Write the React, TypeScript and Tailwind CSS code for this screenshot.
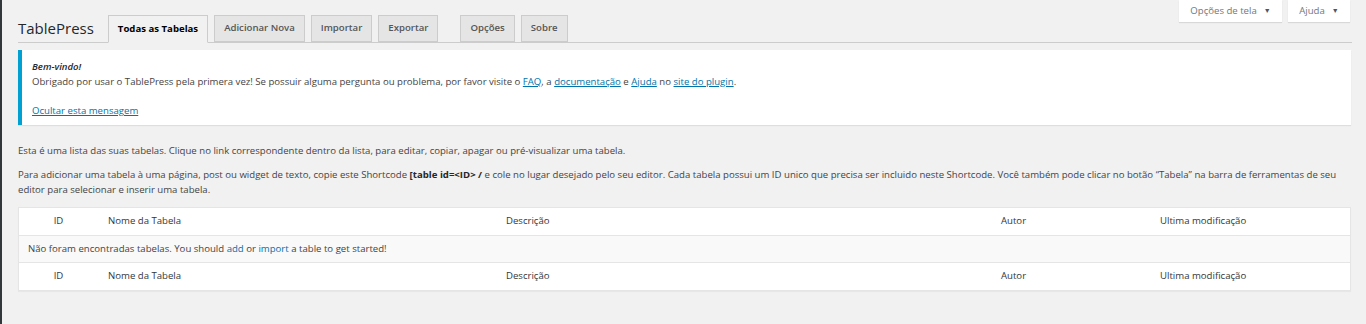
import React from 'react'

const font = { fontFamily: '"Open Sans", "Noto Sans", sans-serif' }

const Tab = ({ label, active = false }: { label: string; active?: boolean }) => {
    if (active) {
        return (
            <div className="h-[28px] -mb-px px-[9px] flex items-center border border-[#ccc] border-b-[#f1f1f1] bg-[#f1f1f1] text-[9.6px] font-bold text-black">
                {label}
            </div>
        )
    }
    return (
        <div className="h-[27px] px-[9px] flex items-center border border-[#ccc] bg-[#e5e5e5] text-[9.6px] font-semibold text-[#555]">
            {label}
        </div>
    )
}

const HeaderRow = () => (
    <div className="grid grid-cols-[79px_398px_495px_159px_1fr] h-[27px] items-center text-[9.6px] text-[#32373c]">
        <div className="text-center">ID</div>
        <div className="pl-[10px]">Nome da Tabela</div>
        <div className="pl-[10px]">Descrição</div>
        <div className="pl-[10px]">Autor</div>
        <div className="pl-[10px]">Ultima modificação</div>
    </div>
)

const App = () => {
    return (
        <div className="flex min-h-[324px] bg-[#f1f1f1] text-[#444]" style={font}>
            <div className="w-[2px] bg-[#32373c] shrink-0"></div>

            <div className="flex-1 pl-[16px] pr-[15px] relative">
                {/* screen options */}
                <div className="absolute right-[16px] top-0 flex gap-[6px]">
                    <div className="h-[22px] w-[103px] bg-white shadow-[0_1px_1px_rgba(0,0,0,0.1)] flex items-center justify-center gap-[7px] text-[9.6px] text-[#72777c]">
                        Opções de tela <span className="text-[7px] text-[#555]">▼</span>
                    </div>
                    <div className="h-[22px] w-[62px] bg-white shadow-[0_1px_1px_rgba(0,0,0,0.1)] flex items-center justify-center gap-[7px] text-[9.6px] text-[#72777c]">
                        Ajuda <span className="text-[7px] text-[#555]">▼</span>
                    </div>
                </div>

                {/* title + tabs */}
                <div className="flex items-end pt-[15px] border-b border-[#ccc] mr-[-1px]">
                    <h1 className="text-[15px] leading-[27px] text-[#23282d] mr-[14px] self-center">TablePress</h1>
                    <div className="flex items-end gap-[6px]">
                        <Tab label="Todas as Tabelas" active />
                        <Tab label="Adicionar Nova" />
                        <Tab label="Importar" />
                        <Tab label="Exportar" />
                        <div className="w-[10px]"></div>
                        <Tab label="Opções" />
                        <Tab label="Sobre" />
                    </div>
                </div>

                {/* welcome notice */}
                <div className="mt-[7px] bg-white border-l-[4px] border-[#00a0d2] shadow-[0_1px_1px_rgba(0,0,0,0.08)] pl-[10px] pt-[9px] pb-[7px] text-[9.6px] leading-[15px]">
                    <p className="italic font-semibold text-[#23282d]">Bem-vindo!</p>
                    <p>
                        Obrigado por usar o TablePress pela primera vez! Se possuir alguma pergunta ou problema, por favor visite o{' '}
                        <a className="text-[#0073aa] underline">FAQ</a>, a{' '}
                        <a className="text-[#0073aa] underline">documentação</a> e{' '}
                        <a className="text-[#0073aa] underline">Ajuda</a> no{' '}
                        <a className="text-[#0073aa] underline">site do plugin</a>.
                    </p>
                    <p className="mt-[14px]">
                        <a className="text-[#0073aa] underline">Ocultar esta mensagem</a>
                    </p>
                </div>

                {/* intro text */}
                <p className="mt-[18px] text-[9.6px] leading-[15px]">
                    Esta é uma lista das suas tabelas. Clique no link correspondente dentro da lista, para editar, copiar, apagar ou pré-visualizar uma tabela.
                </p>
                <div className="mt-[9px] text-[9.6px] leading-[15px]">
                    <p className="whitespace-nowrap">
                        Para adicionar uma tabela à uma página, post ou widget de texto, copie este Shortcode{' '}
                        <span className="font-bold text-[#23282d]">[table id=&lt;ID&gt; /</span> e cole no lugar desejado pelo seu editor. Cada tabela possui um ID unico que precisa ser incluido neste Shortcode. Você também pode clicar no botão “Tabela” na barra de ferramentas de seu
                    </p>
                    <p>editor para selecionar e inserir uma tabela.</p>
                </div>

                {/* table */}
                <div className="mt-[10px] bg-white border border-[#e5e5e5] shadow-[0_1px_1px_rgba(0,0,0,0.04)]">
                    <HeaderRow />
                    <div className="h-[28px] flex items-center pl-[9px] bg-[#f9f9f9] border-y border-[#e5e5e5] text-[9.6px]">
                        Não foram encontradas tabelas. You should&nbsp;<a className="text-[#0073aa]">add</a>&nbsp;or&nbsp;<a className="text-[#0073aa]">import</a>&nbsp;a table to get started!
                    </div>
                    <HeaderRow />
                </div>
            </div>
        </div>
    )
}

export default App
